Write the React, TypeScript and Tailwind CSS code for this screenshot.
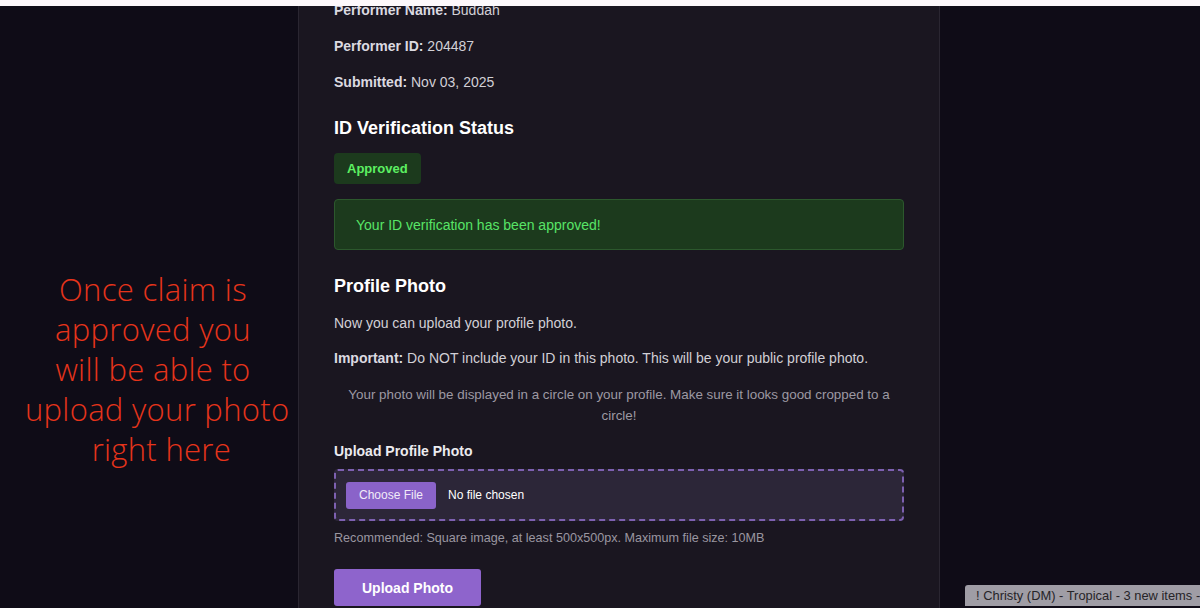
export default function App() {
  return (
    <div className="relative h-[608px] w-[1200px] overflow-hidden bg-[#0f0c17] font-['Liberation_Sans',Arial,sans-serif]">
      <div className="flex h-full">
        {/* left note */}
        <div className="w-[298px] shrink-0 pt-[269px] pl-[8px] text-center font-['Open_Sans',sans-serif] text-[31px] font-light leading-[40px] tracking-[0.01em] text-[#e6341b]">
          Once claim is
          <br />
          approved you
          <br />
          will be able to
          <br />
          {"\u00a0"}upload your photo
          <br />
          {"\u00a0\u00a0"}right here
        </div>

        {/* panel */}
        <div className="w-[642px] shrink-0 border-x border-[#2a2631] bg-[#1a1620] px-[35px] text-[14px] leading-5 text-[#d2d0d6]">
          <p>
            <span className="font-bold text-[#dcdae0]">Performer Name:</span> Buddah
          </p>
          <p className="mt-4">
            <span className="font-bold text-[#dcdae0]">Performer ID:</span> 204487
          </p>
          <p className="mt-4">
            <span className="font-bold text-[#dcdae0]">Submitted:</span> Nov 03, 2025
          </p>

          <h2 className="mt-6 text-[18px] font-bold leading-6 text-white">ID Verification Status</h2>
          <div className="mt-[13px] inline-flex h-[31px] items-center rounded-[4px] bg-[#1c3a1d] px-[13px] text-[13px] font-bold text-[#5cf062]">
            Approved
          </div>
          <div className="mt-[15px] flex h-[51px] items-center rounded-[4px] border border-[#2c582d] bg-[#1c3a1d] px-[21px] text-[#58e467]">
            Your ID verification has been approved!
          </div>

          <h2 className="mt-6 text-[18px] font-bold leading-6 text-white">Profile Photo</h2>
          <p className="mt-[15px]">Now you can upload your profile photo.</p>
          <p className="mt-[15px]">
            <span className="font-bold text-[#dcdae0]">Important:</span> Do NOT include your ID in this photo. This will be your public profile photo.
          </p>
          <p className="mt-4 text-center text-[13.4px] leading-[21px] text-[#9d99a3]">
            Your photo will be displayed in a circle on your profile. Make sure it looks good cropped to a circle!
          </p>

          <p className="mt-[15px] font-bold text-[#ecebef]">Upload Profile Photo</p>
          <div className="mt-2 flex h-[52px] items-center gap-[12px] rounded-[4px] border-2 border-dashed border-[#7d60b0] bg-[#2c2638] px-[10px]">
            <button className="h-[27px] rounded-[3px] bg-[#8a63c9] px-[13px] text-[12px] text-[#f1ebf8]">
              Choose File
            </button>
            <span className="text-[12px] text-white">No file chosen</span>
          </div>
          <p className="mt-[9px] text-[12.6px] leading-4 text-[#9a96a0]">
            Recommended: Square image, at least 500x500px. Maximum file size: 10MB
          </p>

          <button className="mt-[23px] h-[37px] w-[147px] rounded-[3px] bg-[#8e64cc] text-[14px] font-bold text-white">
            Upload Photo
          </button>
        </div>

        <div className="flex-1" />
      </div>

      {/* top strip */}
      <div className="absolute inset-x-0 top-0 h-[6px] bg-[#fdf8fb]" />

      {/* tooltip */}
      <div className="absolute bottom-[2px] right-0 flex h-[21px] w-[235px] items-center overflow-hidden whitespace-nowrap rounded-tl-[3px] bg-[#9f9da5] pl-[11px] text-[12.9px] text-[#262428]">
        ! Christy (DM) - Tropical - 3 new items -
      </div>
    </div>
  )
}
